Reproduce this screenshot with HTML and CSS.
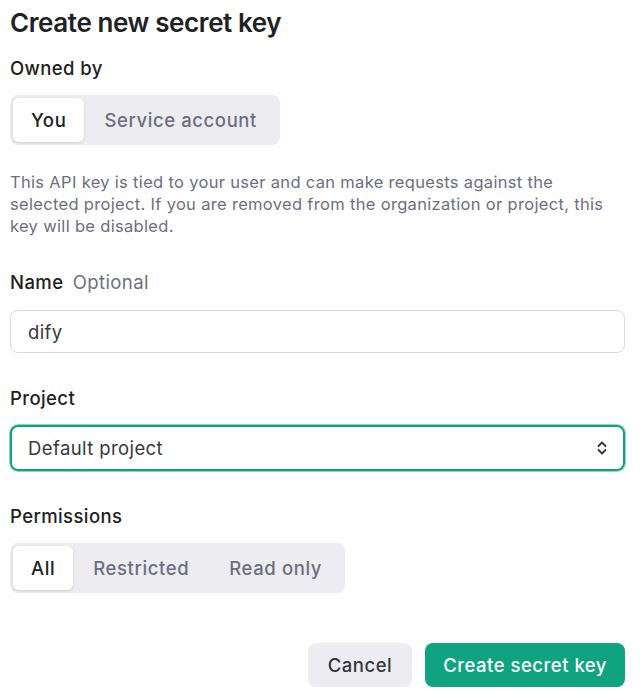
FILE: index.html
```html
<!DOCTYPE html>
<html>
<head>
<meta charset="utf-8">
<link rel="stylesheet" href="styles.css">
</head>
<body>
<div class="modal">
  <h1 class="title">Create new secret key</h1>
  <div class="label owned">Owned by</div>
  <div class="seg">
    <div class="seg-item active">You</div>
    <div class="seg-item">Service account</div>
  </div>
  <p class="desc">This API key is tied to your user and can make requests against the selected project. If you are removed from the organization or project, this key will be disabled.</p>
  <div class="label name">Name <span class="opt">Optional</span></div>
  <div class="input">dify</div>
  <div class="label project">Project</div>
  <div class="select">
    <span>Default project</span>
    <svg class="chev" width="14" height="16" viewBox="0 0 14 16" fill="none" stroke="#353740" stroke-width="1.8" stroke-linecap="round" stroke-linejoin="round"><path d="M3.5 6 L7 2.5 L10.5 6"/><path d="M3.5 10 L7 13.5 L10.5 10"/></svg>
  </div>
  <div class="label perms">Permissions</div>
  <div class="seg">
    <div class="seg-item active">All</div>
    <div class="seg-item">Restricted</div>
    <div class="seg-item">Read only</div>
  </div>
  <div class="actions">
    <button class="btn cancel">Cancel</button>
    <button class="btn primary">Create secret key</button>
  </div>
</div>
</body>
</html>
```
FILE: styles.css
```css
html, body {
  margin: 0;
  padding: 0;
  background: #ffffff;
}
body {
  font-family: Inter, "Noto Sans", sans-serif;
  color: #202123;
}
.modal {
  width: 615px;
  padding: 0 0 0 10px;
  display: flex;
  flex-direction: column;
  align-items: flex-start;
}
.title {
  margin: 8px 0 0 0;
  font-size: 26px;
  line-height: 30px;
  font-weight: 600;
  letter-spacing: -0.4px;
}
.label {
  font-size: 18.5px;
  line-height: 24px;
  font-weight: 500;
  letter-spacing: 0.4px;
  color: #202123;
}
.owned { margin-top: 18px; }
.seg {
  margin-top: 15px;
  display: flex;
  background: #ececf1;
  border-radius: 8px;
  padding: 3px;
}
.seg-item {
  height: 44px;
  display: flex;
  align-items: center;
  padding: 0 20px;
  font-size: 18.5px;
  letter-spacing: 0.6px;
  font-weight: 500;
  color: #6e6e80;
  border-radius: 6px;
}
.seg-item.active {
  background: #ffffff;
  color: #202123;
  box-shadow: 0 1px 3px rgba(0,0,0,0.12);
  padding: 0 18px;
}
.desc {
  margin: 26px 0 0 0;
  font-size: 16.5px;
  line-height: 22px;
  letter-spacing: 0.32px;
  color: #6e6e80;
  width: 615px;
}
.name { margin-top: 33px; }
.opt { color: #6e6e80; font-weight: 400; margin-left: 4px; }
.input {
  margin-top: 16px;
  box-sizing: border-box;
  width: 615px;
  height: 43px;
  border: 1px solid #d9d9e3;
  border-radius: 8px;
  padding: 0 17px;
  display: flex;
  align-items: center;
  font-size: 18.5px;
  letter-spacing: 0.4px;
  color: #353740;
}
.project { margin-top: 33px; }
.select {
  margin-top: 15px;
  box-sizing: border-box;
  width: 615px;
  height: 46px;
  border: 2px solid #10a37f;
  box-shadow: 0 0 0 1px rgba(16,163,127,0.45);
  border-radius: 8px;
  padding: 0 16px;
  display: flex;
  align-items: center;
  justify-content: space-between;
  font-size: 18.5px;
  letter-spacing: 0.4px;
  color: #353740;
}
.chev { margin-right: -2px; }
.perms { margin-top: 33px; }
.actions {
  margin-top: 50px;
  align-self: flex-end;
  display: flex;
  gap: 13px;
}
.btn {
  font-family: Inter, "Noto Sans", sans-serif;
  height: 44px;
  border: none;
  border-radius: 8px;
  font-size: 18.5px;
  letter-spacing: 0.5px;
  font-weight: 500;
  padding: 0 18px;
}
.cancel {
  background: #ececf1;
  color: #353740;
  padding: 0 20px;
}
.primary {
  background: #10a37f;
  color: #ffffff;
}
```
